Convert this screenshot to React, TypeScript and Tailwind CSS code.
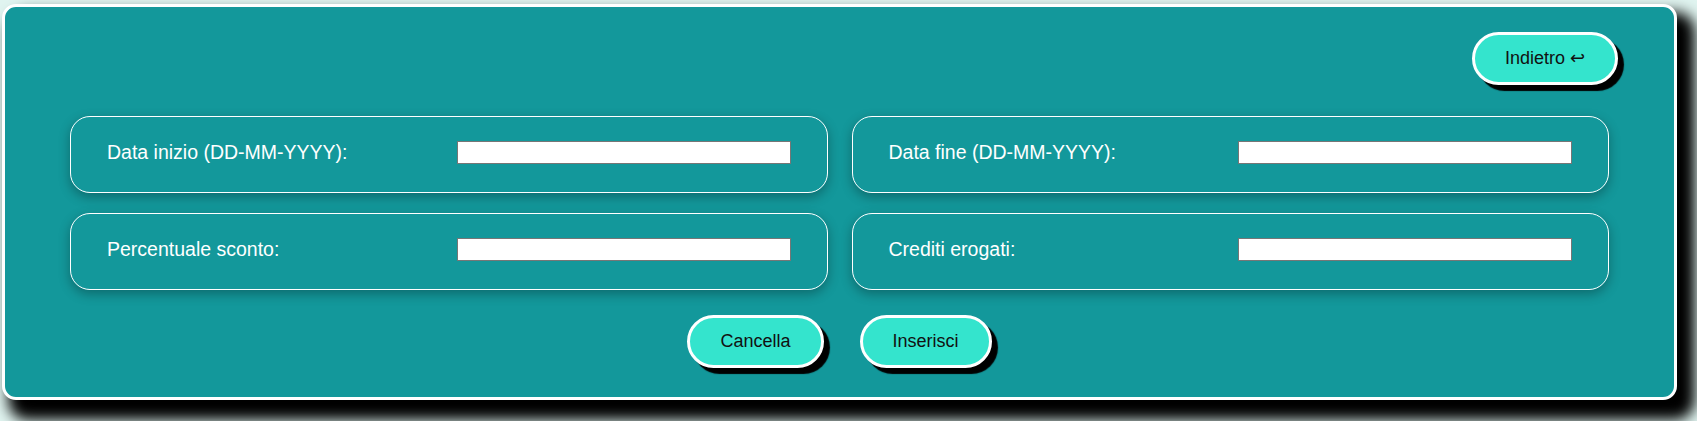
const FIELDS = [
  "Data inizio (DD-MM-YYYY):",
  "Data fine (DD-MM-YYYY):",
  "Percentuale sconto:",
  "Crediti erogati:",
];

function PillButton({ children }: { children: React.ReactNode }) {
  return (
    <button className="h-[53px] px-[30px] rounded-full border-[3px] border-white bg-[#34e4cd] text-[#111] text-[18px] shadow-[6px_6px_1px_#000]">
      {children}
    </button>
  );
}

export default function App() {
  return (
    <div
      className="h-[421px] bg-[#e0f4f0] pl-[2px] pt-[4px] overflow-hidden"
      style={{ fontFamily: '"Liberation Sans", Arial, sans-serif' }}
    >
      <div className="w-[1675px] h-[396px] rounded-[14px] border-[3px] border-white bg-[#13989b] shadow-[12px_14px_14px_6px_#000]">
        <div className="flex justify-end pt-[25px] pr-[56px]">
          <PillButton>Indietro ↩</PillButton>
        </div>

        <div className="grid grid-cols-2 gap-x-[24px] gap-y-[20px] px-[65px] mt-[31px]">
          {FIELDS.map((label) => (
            <div
              key={label}
              className="h-[77px] flex items-center px-[36px] rounded-[20px] border border-white shadow-[0_4px_12px_rgba(0,0,0,0.3)]"
            >
              <label className="flex-1 text-white text-[19.5px] -mt-[4px]">{label}</label>
              <input className="w-[334px] h-[23px] bg-white border border-[#767676] -mt-[4px]" />
            </div>
          ))}
        </div>

        <div className="flex justify-center gap-[36px] mt-[25px]">
          <PillButton>Cancella</PillButton>
          <PillButton>Inserisci</PillButton>
        </div>
      </div>
    </div>
  );
}
